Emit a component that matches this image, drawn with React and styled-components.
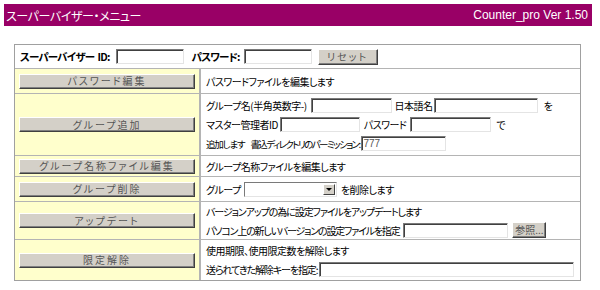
import React from 'react';
import styled, { createGlobalStyle } from 'styled-components';

const GlobalStyle = createGlobalStyle`
  body {
    margin: 0;
    background: #ffffff;
    font-family: "Noto Sans CJK JP", "Liberation Sans", sans-serif;
    font-size: 10px;
    letter-spacing: -0.5px;
    font-feature-settings: "palt";
    color: #000;
  }
`;

const Page = styled.div`
  padding: 4px 8px 0 4px;
`;

const TitleBar = styled.div`
  display: flex;
  justify-content: space-between;
  align-items: center;
  height: 22px;
  width: 588px;
  padding: 0 4px 0 2px;
  box-sizing: border-box;
  background: #990066;
  color: #ffffff;
`;

const Title = styled.span`
  font-size: 12px;
  letter-spacing: -0.4px;
`;

const Version = styled.span`
  font-family: "Liberation Sans", Arial, sans-serif;
  font-size: 12px;
  letter-spacing: 0;
`;

const Panel = styled.div`
  margin: 18px 0 0 10px;
  width: 567px;
  border: 1px solid #a0a0a0;
  box-sizing: border-box;
  display: grid;
  grid-template-columns: 185px minmax(0, 1fr);
`;

const Cell = styled.div`
  height: ${(p) => p.$h}px;
  box-sizing: border-box;
  border: 1px solid #b4b4b4;
  border-width: ${(p) => (p.$first ? '0' : '1px')} 0 0 0;
  display: flex;
  flex-direction: column;
  justify-content: center;
  min-width: 0;
`;

const WideCell = styled(Cell)`
  grid-column: 1 / span 2;
  flex-direction: row;
  align-items: center;
  justify-content: flex-start;
  padding-left: 5px;
  gap: 4px;
  border-bottom: 1px solid #b4b4b4;
`;

const ActionCell = styled(Cell)`
  background: #ffffcc;
  align-items: flex-start;
  padding-left: 4px;
  border-right: 1px solid #b4b4b4;
`;

const InfoCell = styled(Cell)`
  padding-left: 5px;
  gap: ${(p) => p.$gap || 0}px;
  border-left: 1px solid #b4b4b4;
`;

const Line = styled.div`
  display: flex;
  align-items: center;
  white-space: nowrap;
  height: 17px;
`;

const Narrow = styled.span`
  font-size: ${(p) => p.$fs || 10}px;
  letter-spacing: ${(p) => p.$ls}px;
`;

const Bold = styled.span`
  font-weight: bold;
  font-size: 10.5px;
  letter-spacing: -0.8px;
  margin-right: ${(p) => p.$mr || 0}px;
`;

const Gap = styled.span`
  display: inline-block;
  width: ${(p) => p.$w}px;
`;

const TextInput = styled.input`
  width: ${(p) => p.$w}px;
  height: 15px;
  box-sizing: border-box;
  border: 1px solid;
  border-color: #7a7a7a #e4e4e4 #e4e4e4 #7a7a7a;
  box-shadow: inset 1px 1px 0 #404040;
  background: #fff;
  padding: 0 1px;
  font-family: "Liberation Sans", sans-serif;
  font-size: 10px;
  letter-spacing: 0;
  color: #555;
  margin: 0 ${(p) => p.$mr || 0}px 0 ${(p) => p.$ml || 0}px;
`;

const OldButton = styled.button`
  width: ${(p) => p.$w}px;
  height: ${(p) => p.$h || 15}px;
  box-sizing: border-box;
  background: #d4d0c8;
  border: 1px solid;
  border-color: #ffffff #404040 #404040 #ffffff;
  box-shadow: inset -1px -1px 0 #808080;
  padding: 0;
  font-family: "Noto Sans CJK JP", sans-serif;
  font-feature-settings: "palt";
  font-size: 10px;
  line-height: 12px;
  letter-spacing: ${(p) => p.$ls ?? 2}px;
  color: #555;
  margin-left: ${(p) => p.$ml || 0}px;
`;

const Select = styled.div`
  display: inline-flex;
  align-items: center;
  justify-content: flex-end;
  width: 93px;
  height: 15px;
  box-sizing: border-box;
  border: 1px solid;
  border-color: #7a7a7a #e4e4e4 #e4e4e4 #7a7a7a;
  background: #fff;
  margin: 0 4px 0 3px;
`;

const Arrow = styled.span`
  width: 12px;
  height: 11px;
  margin-right: 1px;
  background: #d4d0c8;
  border: 1px solid;
  border-color: #fff #404040 #404040 #fff;
  box-sizing: border-box;
  display: flex;
  align-items: center;
  justify-content: center;
  &::after {
    content: '';
    border-left: 3px solid transparent;
    border-right: 3px solid transparent;
    border-top: 3px solid #000;
  }
`;

const Action = ({ label }) => <OldButton $w={176}>{label}</OldButton>;

export default function App() {
  return (
    <Page>
      <GlobalStyle />
      <TitleBar>
        <Title>スーパーバイザー・メニュー</Title>
        <Version>Counter_pro Ver 1.50</Version>
      </TitleBar>
      <Panel>
        <WideCell $h={24} $first>
          <Bold $mr={2}>スーパーバイザー&nbsp;&nbsp;ID:</Bold>
          <TextInput $w={68} $mr={4} />
          <Bold>パスワード:</Bold>
          <TextInput $w={68} $mr={2} />
          <OldButton $w={60} $h={16}>リセット</OldButton>
        </WideCell>

        <ActionCell $h={24} $first>
          <Action label="パスワード編集" />
        </ActionCell>
        <InfoCell $h={24} $first>
          <Line>パスワードファイルを編集します</Line>
        </InfoCell>

        <ActionCell $h={62}>
          <Action label="グループ追加" />
        </ActionCell>
        <InfoCell $h={62} $gap={2}>
          <Line>
            グループ名(半角英数字-)
            <TextInput $w={81} $ml={4} $mr={3} />
            日本語名
            <TextInput $w={104} $ml={1} $mr={6} />
            を
          </Line>
          <Line>
            マスター管理者ID
            <TextInput $w={80} $ml={2} $mr={4} />
            パスワード
            <TextInput $w={81} $ml={4} $mr={5} />
            で
          </Line>
          <Line>
            <Narrow $fs={9.5} $ls={-1.2}>追加します</Narrow>
            <Gap $w={6} />
            <Narrow $fs={9.5} $ls={-1.6}>書込ディレクトリのパーミッション:</Narrow>
            <TextInput $w={85} $ml={2} defaultValue="777" />
          </Line>
        </InfoCell>

        <ActionCell $h={21}>
          <Action label="グループ名称ファイル編集" />
        </ActionCell>
        <InfoCell $h={21}>
          <Line>グループ名称ファイルを編集します</Line>
        </InfoCell>

        <ActionCell $h={25}>
          <Action label="グループ削除" />
        </ActionCell>
        <InfoCell $h={25}>
          <Line>
            グループ
            <Select>
              <Arrow />
            </Select>
            を削除します
          </Line>
        </InfoCell>

        <ActionCell $h={38}>
          <Action label="アップデート" />
        </ActionCell>
        <InfoCell $h={38} $gap={2}>
          <Line>
            <Narrow $ls={-1.1}>バージョンアップの為に設定ファイルをアップデートします</Narrow>
          </Line>
          <Line>
            <Narrow $ls={-1.2}>パソコン上の新しいバージョンの設定ファイルを指定</Narrow>
            <TextInput $w={105} $ml={4} $mr={4} />
            <OldButton $w={34} $h={16} $ls={0}>参照...</OldButton>
          </Line>
        </InfoCell>

        <ActionCell $h={41}>
          <Action label="限定解除" />
        </ActionCell>
        <InfoCell $h={41} $gap={2}>
          <Line>使用期限、使用限定数を解除します</Line>
          <Line>
            <Narrow $ls={-1.1}>送られてきた解除キーを指定:</Narrow>
            <TextInput $w={255} $ml={2} />
          </Line>
        </InfoCell>
      </Panel>
    </Page>
  );
}
